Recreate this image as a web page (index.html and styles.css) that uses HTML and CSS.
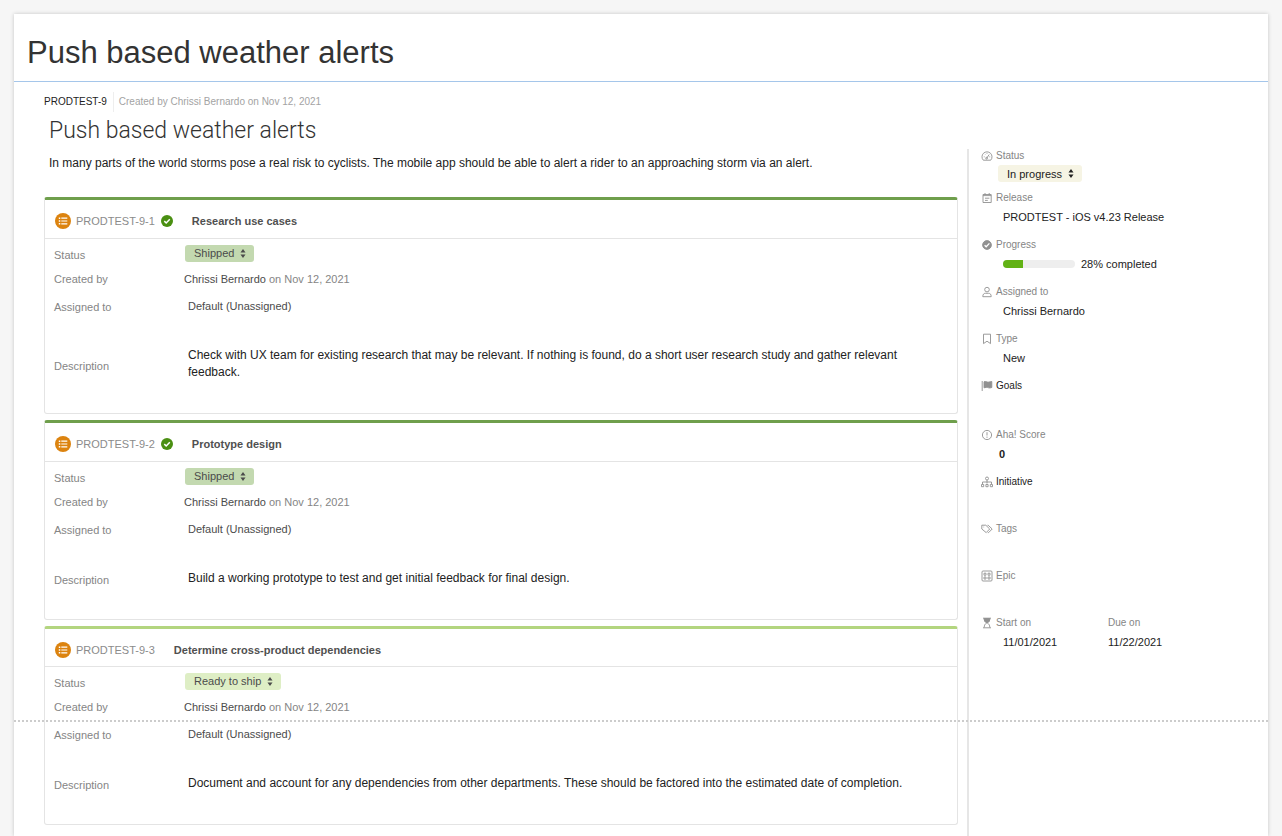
FILE: index.html
```html
<!DOCTYPE html>
<html lang="en">
<head>
    <meta charset="UTF-8">
    <meta name="viewport" content="width=device-width, initial-scale=1.0">
    <title>Push based weather alerts</title>
    <link rel="stylesheet" href="styles.css">
</head>
<body>
    <!-- Shared icons -->
    <svg class="sprite" aria-hidden="true">
        <symbol id="arrows" viewBox="0 0 6 10">
            <path d="M3 0l2.8 4H.2zM3 10L.2 6h5.6z" fill="currentColor"/>
        </symbol>
        <symbol id="list" viewBox="0 0 16 16">
            <circle cx="8" cy="8" r="8" fill="#dc830f"/>
            <path d="M6.3 5.200h6M6.3 8h6M6.3 10.800h6" stroke="#fff" stroke-width="1.2"/>
            <path d="M3.8 5.200h1.5M3.8 8h1.5M3.8 10.800h1.5" stroke="#fff" stroke-width="1.4"/>
        </symbol>
        <symbol id="done" viewBox="0 0 12 12">
            <circle cx="6" cy="6" r="6" fill="#4a8f12"/>
            <path d="M3.3 6.1l1.9 1.9 3.6-3.7" fill="none" stroke="#fff" stroke-width="1.5"/>
        </symbol>
    </svg>

    <div class="sheet">
        <header class="sheet-header">
            <h1>Push based weather alerts</h1>
        </header>

        <div class="columns">
            <main>
                <div class="meta">
                    <a href="#">PRODTEST-9</a>
                    <span>Created by Chrissi Bernardo on Nov 12, 2021</span>
                </div>
                <h2>Push based weather alerts</h2>
                <p class="intro">In many parts of the world storms pose a real risk to cyclists. The mobile app should be able to alert a rider to an approaching storm via an alert.</p>

                <section class="card shipped">
                    <div class="card-header">
                        <svg class="list-icon"><use href="#list"/></svg>
                        <a href="#">PRODTEST-9-1</a>
                        <svg class="done-icon"><use href="#done"/></svg>
                        <h3>Research use cases</h3>
                    </div>
                    <div class="fields">
                        <label for="status-1">Status</label>
                        <div class="value">
                            <span class="pill"><select id="status-1"><option>Shipped</option></select><svg><use href="#arrows"/></svg></span>
                        </div>
                        <span class="name">Created by</span>
                        <div class="value">Chrissi Bernardo <span class="date">on Nov 12, 2021</span></div>
                        <span class="name">Assigned to</span>
                        <div class="value assigned">Default (Unassigned)</div>
                        <span class="name">Description</span>
                        <p class="value description">Check with UX team for existing research that may be relevant. If nothing is found, do a short user research study and gather relevant feedback.</p>
                    </div>
                </section>

                <section class="card shipped">
                    <div class="card-header">
                        <svg class="list-icon"><use href="#list"/></svg>
                        <a href="#">PRODTEST-9-2</a>
                        <svg class="done-icon"><use href="#done"/></svg>
                        <h3>Prototype design</h3>
                    </div>
                    <div class="fields">
                        <label for="status-2">Status</label>
                        <div class="value">
                            <span class="pill"><select id="status-2"><option>Shipped</option></select><svg><use href="#arrows"/></svg></span>
                        </div>
                        <span class="name">Created by</span>
                        <div class="value">Chrissi Bernardo <span class="date">on Nov 12, 2021</span></div>
                        <span class="name">Assigned to</span>
                        <div class="value assigned">Default (Unassigned)</div>
                        <span class="name">Description</span>
                        <p class="value description">Build a working prototype to test and get initial feedback for final design.</p>
                    </div>
                </section>

                <section class="card ready">
                    <div class="card-header">
                        <svg class="list-icon"><use href="#list"/></svg>
                        <a href="#">PRODTEST-9-3</a>
                        <h3>Determine cross-product dependencies</h3>
                    </div>
                    <div class="fields">
                        <label for="status-3">Status</label>
                        <div class="value">
                            <span class="pill"><select id="status-3"><option>Ready to ship</option></select><svg><use href="#arrows"/></svg></span>
                        </div>
                        <span class="name">Created by</span>
                        <div class="value">Chrissi Bernardo <span class="date">on Nov 12, 2021</span></div>
                        <span class="name">Assigned to</span>
                        <div class="value assigned">Default (Unassigned)</div>
                        <span class="name">Description</span>
                        <p class="value description">Document and account for any dependencies from other departments. These should be factored into the estimated date of completion.</p>
                    </div>
                </section>
            </main>

            <aside>
                <div class="item status-item">
                    <svg viewBox="0 0 12 12"><path d="M2.3 10.2a5 5 0 1 1 7.4 0zM5.6 8.3l2.6-3.8M2.8 6.8h.8M4 4.2l.4.4M6 3.2v.7M8.4 6.8h.8"/><circle cx="5.6" cy="8.2" r=".9"/></svg>
                    <label for="status">Status</label>
                    <div class="item-value">
                        <span class="pill"><select id="status"><option>In progress</option></select><svg><use href="#arrows"/></svg></span>
                    </div>
                </div>
                <div class="item">
                    <svg viewBox="0 0 12 12"><path d="M2 2.5h8.2v8H2zM2 3.6h8.2M4 1v2M8.2 1v2M4 6.2h4.4M4 8.4h2.8"/></svg>
                    <span class="name">Release</span>
                    <div class="item-value">PRODTEST - iOS v4.23 Release</div>
                </div>
                <div class="item">
                    <svg viewBox="0 0 12 12"><circle class="solid" cx="6" cy="6" r="4.4"/><path class="white" d="M3.6 6.2l1.6 1.6 3.2-3.4"/></svg>
                    <label for="progress">Progress</label>
                    <div class="item-value progress"><progress id="progress" value="28" max="100"></progress>28% completed</div>
                </div>
                <div class="item">
                    <svg viewBox="0 0 12 12"><circle cx="6" cy="3.6" r="2.3"/><path d="M1.8 10.7c0-2.4 1-3.4 2.6-3.4h3.2c1.6 0 2.6 1 2.6 3.4z"/></svg>
                    <span class="name">Assigned to</span>
                    <div class="item-value">Chrissi Bernardo</div>
                </div>
                <div class="item">
                    <svg viewBox="0 0 12 12"><path d="M2.5 1.2h7v9.400L6 8.200l-3.500 2.400z"/></svg>
                    <span class="name">Type</span>
                    <div class="item-value">New</div>
                </div>
                <div class="item goals-item">
                    <svg viewBox="0 0 12 12"><path d="M1.2 1v10"/><path class="solid" d="M3 1.800c2-.8 3 .6 4.800.3l3-.6v6c-2.800 1.200-4-.4-5.600-.1l-2.200.4z"/></svg>
                    <span class="name dark">Goals</span>
                </div>
                <div class="item">
                    <svg viewBox="0 0 12 12"><circle cx="6" cy="6" r="4.6"/><path d="M6 3.200v3.300M6 7.600v1.200"/></svg>
                    <span class="name">Aha! Score</span>
                    <div class="item-value score">0</div>
                </div>
                <div class="item">
                    <svg viewBox="0 0 12 12"><circle cx="6" cy="2.5" r="1.5"/><path d="M6 4v3.500M1.500 8V6h9v2M.5 8.500h2.200v2.200H.5zM4.900 8.500h2.200v2.200H4.900zM9.300 8.500h2.200v2.200H9.300z"/></svg>
                    <span class="name dark">Initiative</span>
                </div>
                <div class="item">
                    <svg viewBox="0 0 12 12"><path d="M.8 2.200h4L8.700 6 5.200 9.600.8 6zM6.500 2.200h.6L11.200 6 7.600 9.600h-.8"/><path d="M2.500 4h.6"/></svg>
                    <span class="name">Tags</span>
                </div>
                <div class="item">
                    <svg viewBox="0 0 12 12"><rect x="1" y="1" width="10" height="10" rx="1"/><path d="M3 3.200h2v2H3zM7 3.200h2v2H7zM3 7h2v2H3zM7 7h2v2H7z"/></svg>
                    <span class="name">Epic</span>
                </div>
                <div class="dates">
                    <div class="item">
                        <svg viewBox="0 0 12 12"><path d="M2 1.200h8M2 10.800h8M3.200 1.500c0 2.500 1 3.500 2.300 4.500-1.300 1-2.300 2-2.300 4.500M8.800 1.500c0 2.500-1 3.500-2.300 4.500 1.300 1 2.300 2 2.300 4.500"/><path class="solid" d="M3.200 1.500h5.600c0 2.500-1 3.500-2.800 4.500-1.800-1-2.800-2-2.800-4.500z"/></svg>
                        <span class="name">Start on</span>
                        <div class="item-value">11/01/2021</div>
                    </div>
                    <div class="due">
                        <span class="name">Due on</span>
                        <div>11/22/2021</div>
                    </div>
                </div>
            </aside>
        </div>

        <!-- Marks where the printed page ends -->
        <div class="page-break"></div>
    </div>
</body>
</html>
```
FILE: styles.css
```css
* {
    margin: 0;
    padding: 0;
    box-sizing: border-box;
}

body {
    background-color: #f6f6f6;
    font-family: "Liberation Sans", Arial, sans-serif;
    font-size: 11px;
    line-height: 14px;
    color: #222;
    padding: 14px 14px 0;
}

a {
    color: inherit;
    text-decoration: none;
}

.sprite {
    display: none;
}

.sheet {
    position: relative;
    display: flex;
    flex-direction: column;
    min-height: calc(100vh - 14px);
    background-color: #fff;
    box-shadow: 0 0 4px rgba(0, 0, 0, 0.2);
}

.sheet-header {
    padding: 20px 13px 10px;
    border-bottom: 1px solid #a5c6ea;
}

h1 {
    font-size: 31px;
    line-height: 37px;
    font-weight: normal;
    color: #333;
}

.columns {
    flex: 1;
    display: grid;
    grid-template-columns: minmax(0, 1fr) 301px;
    column-gap: 9px;
    padding-left: 30px;
}

main {
    padding: 10px 0 11px;
}

.meta {
    display: flex;
    align-items: center;
    font-size: 10px;
    line-height: 20px;
}

.meta span {
    color: #a3a3a3;
    border-left: 1px solid #eee;
    margin-left: 6px;
    padding-left: 5px;
}

h2 {
    font-family: Roboto, "Liberation Sans", sans-serif;
    font-size: 23px;
    line-height: 28px;
    font-weight: 300;
    color: #333;
    margin: 5px 0 0 5px;
}

.intro {
    font-size: 12px;
    line-height: 17px;
    margin: 10px 5px 25px;
}

/* Requirement cards */
.card {
    border: 1px solid #e4e4e4;
    border-top: 3px solid #6f9f4c;
    border-radius: 3px;
    padding-bottom: 5px;
}

.card + .card {
    margin-top: 6px;
}

.card.ready {
    border-top-color: #b3d57f;
}

.card-header {
    display: flex;
    align-items: center;
    height: 39px;
    padding: 4px 10px 0;
    border-bottom: 1px solid #e4e4e4;
    color: #8b8b8b;
}

.card.ready .card-header {
    height: 38px;
}

.list-icon {
    width: 16px;
    height: 16px;
    margin-right: 5px;
}

.done-icon {
    width: 12px;
    height: 12px;
    margin-left: 6px;
}

h3 {
    font-size: 11px;
    color: #505050;
    margin-left: 19px;
}

.fields {
    display: grid;
    grid-template-columns: 130px minmax(0, 1fr);
    grid-template-rows: 28px 24px 32px auto;
    align-items: center;
    padding: 0 9px;
    color: #858585;
}

.fields .value {
    color: #4b4b4b;
}

.fields .date {
    color: #858585;
}

.fields .assigned {
    padding: 0 0 2px 4px;
}

.fields label {
    padding-top: 4px;
}

.fields .description {
    font-size: 12px;
    line-height: 17px;
    color: #222;
    padding: 24px 24px 27px 4px;
}

.pill {
    display: inline-flex;
    align-items: center;
    height: 17px;
    padding: 0 8px 0 9px;
    border-radius: 3px;
    background-color: #f6f4e4;
    vertical-align: top;
}

.pill select {
    appearance: none;
    border: none;
    background: transparent;
    font: inherit;
    color: inherit;
    cursor: pointer;
}

.pill svg {
    width: 6px;
    height: 9px;
    margin-left: 5px;
    pointer-events: none;
}

.card .pill {
    margin-left: 1px;
}

.shipped .pill {
    background-color: #c3d9b0;
}

.ready .pill {
    background-color: #deeec5;
}

/* Sidebar */
aside {
    align-self: stretch;
    margin-top: 67px;
    border-left: 2px solid #e6e6e6;
    padding-left: 12px;
}

.item {
    display: grid;
    grid-template-columns: 12px minmax(0, 1fr);
    grid-template-rows: 14px auto;
    column-gap: 3px;
    row-gap: 5px;
    align-content: start;
    height: 47px;
}

.item > svg {
    width: 12px;
    height: 12px;
    margin-top: 1px;
    fill: none;
    stroke: #919191;
    stroke-width: 0.9px;
}

.item > svg .solid {
    fill: #919191;
}

.item > svg .white {
    stroke: #fff;
    stroke-width: 1.3px;
}

.item label,
.item .name,
.due .name {
    font-size: 10px;
    color: #858585;
}

.item .dark {
    color: #222;
}

.item-value {
    grid-column: 2;
    padding-left: 7px;
}

.status-item {
    height: 42px;
    row-gap: 2px;
}

.status-item .item-value {
    padding-left: 2px;
}

.goals-item {
    height: 49px;
}

.item-value.score {
    padding-left: 3px;
    font-weight: bold;
}

.progress {
    display: flex;
    align-items: center;
    gap: 6px;
}

progress {
    appearance: none;
    width: 72px;
    height: 8px;
    border: none;
    border-radius: 4px;
    overflow: hidden;
}

progress::-webkit-progress-bar {
    background-color: #eee;
}

progress::-webkit-progress-value {
    background-color: #62b215;
}

.dates {
    display: grid;
    grid-template-columns: 127px 1fr;
}

.due .name {
    display: block;
    margin-bottom: 5px;
}

.page-break {
    position: absolute;
    top: 706px;
    left: 0;
    right: 0;
    border-top: 2px dotted #ccc;
}
```
